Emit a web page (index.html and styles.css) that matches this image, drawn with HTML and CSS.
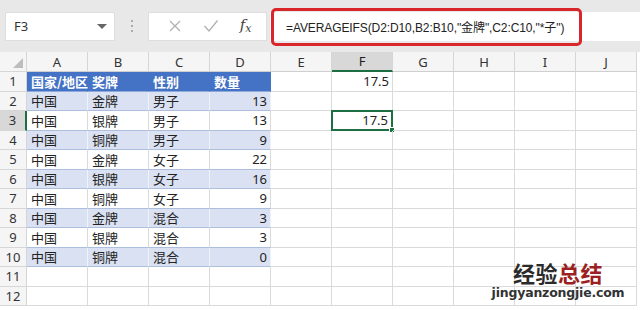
FILE: index.html
```html
<!DOCTYPE html>
<html>
<head>
<meta charset="utf-8">
<link rel="stylesheet" href="styles.css">
</head>
<body>
<div class="app">
  <div class="toolbar">
    <div class="namebox"><span>F3</span><span class="caret"></span></div>
    <div class="dots"><i></i><i></i><i></i></div>
    <div class="fxbox">
      <svg class="ico" width="14" height="14" viewBox="0 0 14 14"><path d="M2 2 L12 12 M12 2 L2 12" stroke="#b0b0b0" stroke-width="1.3" fill="none"/></svg>
      <svg class="ico" width="16" height="14" viewBox="0 0 16 14"><path d="M1.5 7 L6 12 L14.5 1.5" stroke="#b0b0b0" stroke-width="1.3" fill="none"/></svg>
      <span class="fx">f<sub>x</sub></span>
    </div>
    <div class="formula"><span>=AVERAGEIFS(D2:D10,B2:B10,"金牌",C2:C10,"*子")</span></div>
    <div class="redbox"></div>
  </div>
  <div class="sheet">
    <div class="corner"><span class="tri"></span></div>
    <div class="ch">A</div><div class="ch">B</div><div class="ch">C</div><div class="ch">D</div><div class="ch">E</div><div class="ch ch-on">F</div><div class="ch">G</div><div class="ch">H</div><div class="ch">I</div><div class="ch">J</div>

    <div class="rh">1</div><div class="c th">国家/地区</div><div class="c th">奖牌</div><div class="c th">性别</div><div class="c th">数量</div><div class="c"></div><div class="c n">17.5</div><div class="c"></div><div class="c"></div><div class="c"></div><div class="c"></div>

    <div class="rh">2</div><div class="c b">中国</div><div class="c b">金牌</div><div class="c b">男子</div><div class="c b n">13</div><div class="c"></div><div class="c"></div><div class="c"></div><div class="c"></div><div class="c"></div><div class="c"></div>

    <div class="rh rh-on">3</div><div class="c w">中国</div><div class="c w">银牌</div><div class="c w">男子</div><div class="c w n">13</div><div class="c"></div><div class="c n sel">17.5<span class="handle"></span></div><div class="c"></div><div class="c"></div><div class="c"></div><div class="c"></div>

    <div class="rh">4</div><div class="c b">中国</div><div class="c b">铜牌</div><div class="c b">男子</div><div class="c b n">9</div><div class="c"></div><div class="c"></div><div class="c"></div><div class="c"></div><div class="c"></div><div class="c"></div>

    <div class="rh">5</div><div class="c w">中国</div><div class="c w">金牌</div><div class="c w">女子</div><div class="c w n">22</div><div class="c"></div><div class="c"></div><div class="c"></div><div class="c"></div><div class="c"></div><div class="c"></div>

    <div class="rh">6</div><div class="c b">中国</div><div class="c b">银牌</div><div class="c b">女子</div><div class="c b n">16</div><div class="c"></div><div class="c"></div><div class="c"></div><div class="c"></div><div class="c"></div><div class="c"></div>

    <div class="rh">7</div><div class="c w">中国</div><div class="c w">铜牌</div><div class="c w">女子</div><div class="c w n">9</div><div class="c"></div><div class="c"></div><div class="c"></div><div class="c"></div><div class="c"></div><div class="c"></div>

    <div class="rh">8</div><div class="c b">中国</div><div class="c b">金牌</div><div class="c b">混合</div><div class="c b n">3</div><div class="c"></div><div class="c"></div><div class="c"></div><div class="c"></div><div class="c"></div><div class="c"></div>

    <div class="rh">9</div><div class="c w">中国</div><div class="c w">银牌</div><div class="c w">混合</div><div class="c w n">3</div><div class="c"></div><div class="c"></div><div class="c"></div><div class="c"></div><div class="c"></div><div class="c"></div>

    <div class="rh">10</div><div class="c b">中国</div><div class="c b">铜牌</div><div class="c b">混合</div><div class="c b n">0</div><div class="c"></div><div class="c"></div><div class="c"></div><div class="c"></div><div class="c"></div><div class="c"></div>

    <div class="rh">11</div><div class="c"></div><div class="c"></div><div class="c"></div><div class="c"></div><div class="c"></div><div class="c"></div><div class="c"></div><div class="c"></div><div class="c"></div><div class="c"></div>

    <div class="rh">12</div><div class="c"></div><div class="c"></div><div class="c"></div><div class="c"></div><div class="c"></div><div class="c"></div><div class="c"></div><div class="c"></div><div class="c"></div><div class="c"></div>
  </div>
  <div class="wm">
    <div class="wm-t"><span class="k">经验</span><span class="r">总结</span></div>
    <div class="wm-u">jingyanzongjie.com</div>
  </div>
</div>
</body>
</html>
```
FILE: styles.css
```css
* { box-sizing: border-box; }
html, body { margin: 0; padding: 0; }
body {
  width: 640px; height: 310px; overflow: hidden; background: #fff;
  font-family: "Noto Sans CJK SC", "Noto Sans", sans-serif;
  color: #222;
}
.app { position: relative; width: 640px; height: 310px; }
.toolbar {
  position: relative;
  height: 52px;
  background: #e8e8e8;
  display: flex;
  align-items: center;
  padding: 0 0 0 5px;
}
.namebox {
  width: 110px; height: 29px;
  background: #fff;
  border: 1px solid #dedede;
  display: flex; align-items: center; justify-content: space-between;
  padding: 0 7px 0 8px;
  font-size: 13px; color: #333;
  font-family: "Noto Sans", "Liberation Sans", sans-serif;
}
.caret {
  width: 0; height: 0;
  border-left: 5px solid transparent; border-right: 5px solid transparent;
  border-top: 5px solid #666;
}
.dots {
  width: 33px; display: flex; flex-direction: column; align-items: center; gap: 3px;
}
.dots i { display: block; width: 2px; height: 2px; background: #999; border-radius: 1px; }
.fxbox {
  width: 119px; height: 29px; background: #fff;
  border: 1px solid #dedede;
  display: flex; align-items: center; justify-content: space-around;
  padding: 0 4px 0 8px;
}
.fx {
  font-family: "DejaVu Serif", "Liberation Serif", serif;
  font-style: italic; font-size: 15px; color: #444; line-height: 1;
}
.fx sub { font-size: 11px; vertical-align: -2px; }
.formula {
  flex: 1; height: 29px; margin-left: 3px; background: #fff;
  display: flex; align-items: center; padding-left: 16px;
  font-size: 12px; color: #222; letter-spacing: -0.1px;
  font-family: "Liberation Sans", "Noto Sans CJK SC", sans-serif;
  white-space: nowrap;
}
.redbox {
  position: absolute; left: 271px; top: 8px; width: 311px; height: 38px;
  border: 3px solid #d8262a; border-radius: 5px;
}
.sheet {
  display: grid;
  grid-template-columns: 27px repeat(10, 61px);
  grid-template-rows: 20px repeat(12, 19.5px);
  font-size: 13px;
}
.corner {
  position: relative; background: #f5f5f5;
  border-right: 1px solid #d6d6d6; border-bottom: 1px solid #d6d6d6;
}
.tri {
  position: absolute; right: 3px; bottom: 3px; width: 0; height: 0;
  border-left: 10px solid transparent; border-bottom: 10px solid #bdbdbd;
}
.ch {
  background: #f5f5f5;
  border-right: 1px solid #d6d6d6; border-bottom: 1px solid #cfcfcf;
  display: flex; align-items: center; justify-content: center;
  font-family: "Noto Sans", "Liberation Sans", sans-serif; font-size: 13px; color: #333;
}
.ch-on { background: #d8d8d8; border-bottom: 2px solid #1e6e43; color: #1d1d1d; }
.rh {
  background: #f5f5f5;
  border-right: 1px solid #d6d6d6; border-bottom: 1px solid #d6d6d6;
  display: flex; align-items: center; justify-content: center;
  font-family: "Noto Sans", "Liberation Sans", sans-serif; font-size: 13px; color: #333;
}
.rh-on { background: #d8d8d8; border-right: 2px solid #1e6e43; }
.c {
  position: relative;
  border-right: 1px solid #dadada; border-bottom: 1px solid #dadada;
  display: flex; align-items: center; padding: 0 4px;
  white-space: nowrap; color: #222;
}
.n { justify-content: flex-end; padding-right: 3px; font-family: "Noto Sans", "Liberation Sans", sans-serif; }
.th { background: #4472c4; color: #fff; font-weight: bold; border-right-color: #4472c4; border-bottom-color: #8eaadb; }
.b { background: #d9e1f2; border-right-color: #eef2f9; border-bottom-color: #aebedd; }
.w { background: #fff; border-right-color: #dadada; border-bottom-color: #aebedd; }
.sel { border: 2px solid #1e6e43; margin: -1px 0 0 -1px; }
.handle {
  position: absolute; right: -4px; bottom: -4px; width: 6px; height: 6px;
  background: #1e6e43; border: 1px solid #fff;
}
.wm {
  position: absolute; left: 486px; top: 261px; width: 144px;
  display: flex; flex-direction: column; align-items: center;
}
.wm-t { font-size: 22px; font-weight: bold; line-height: 23px; letter-spacing: 0.5px; }
.wm-t .k { color: #2b2b2b; }
.wm-t .r { color: #9c1f22; }
.wm-u {
  font-family: "DejaVu Sans", sans-serif; font-size: 12.5px; font-weight: bold;
  color: #333; line-height: 14px; letter-spacing: -0.2px; margin-top: 2px;
}
```
